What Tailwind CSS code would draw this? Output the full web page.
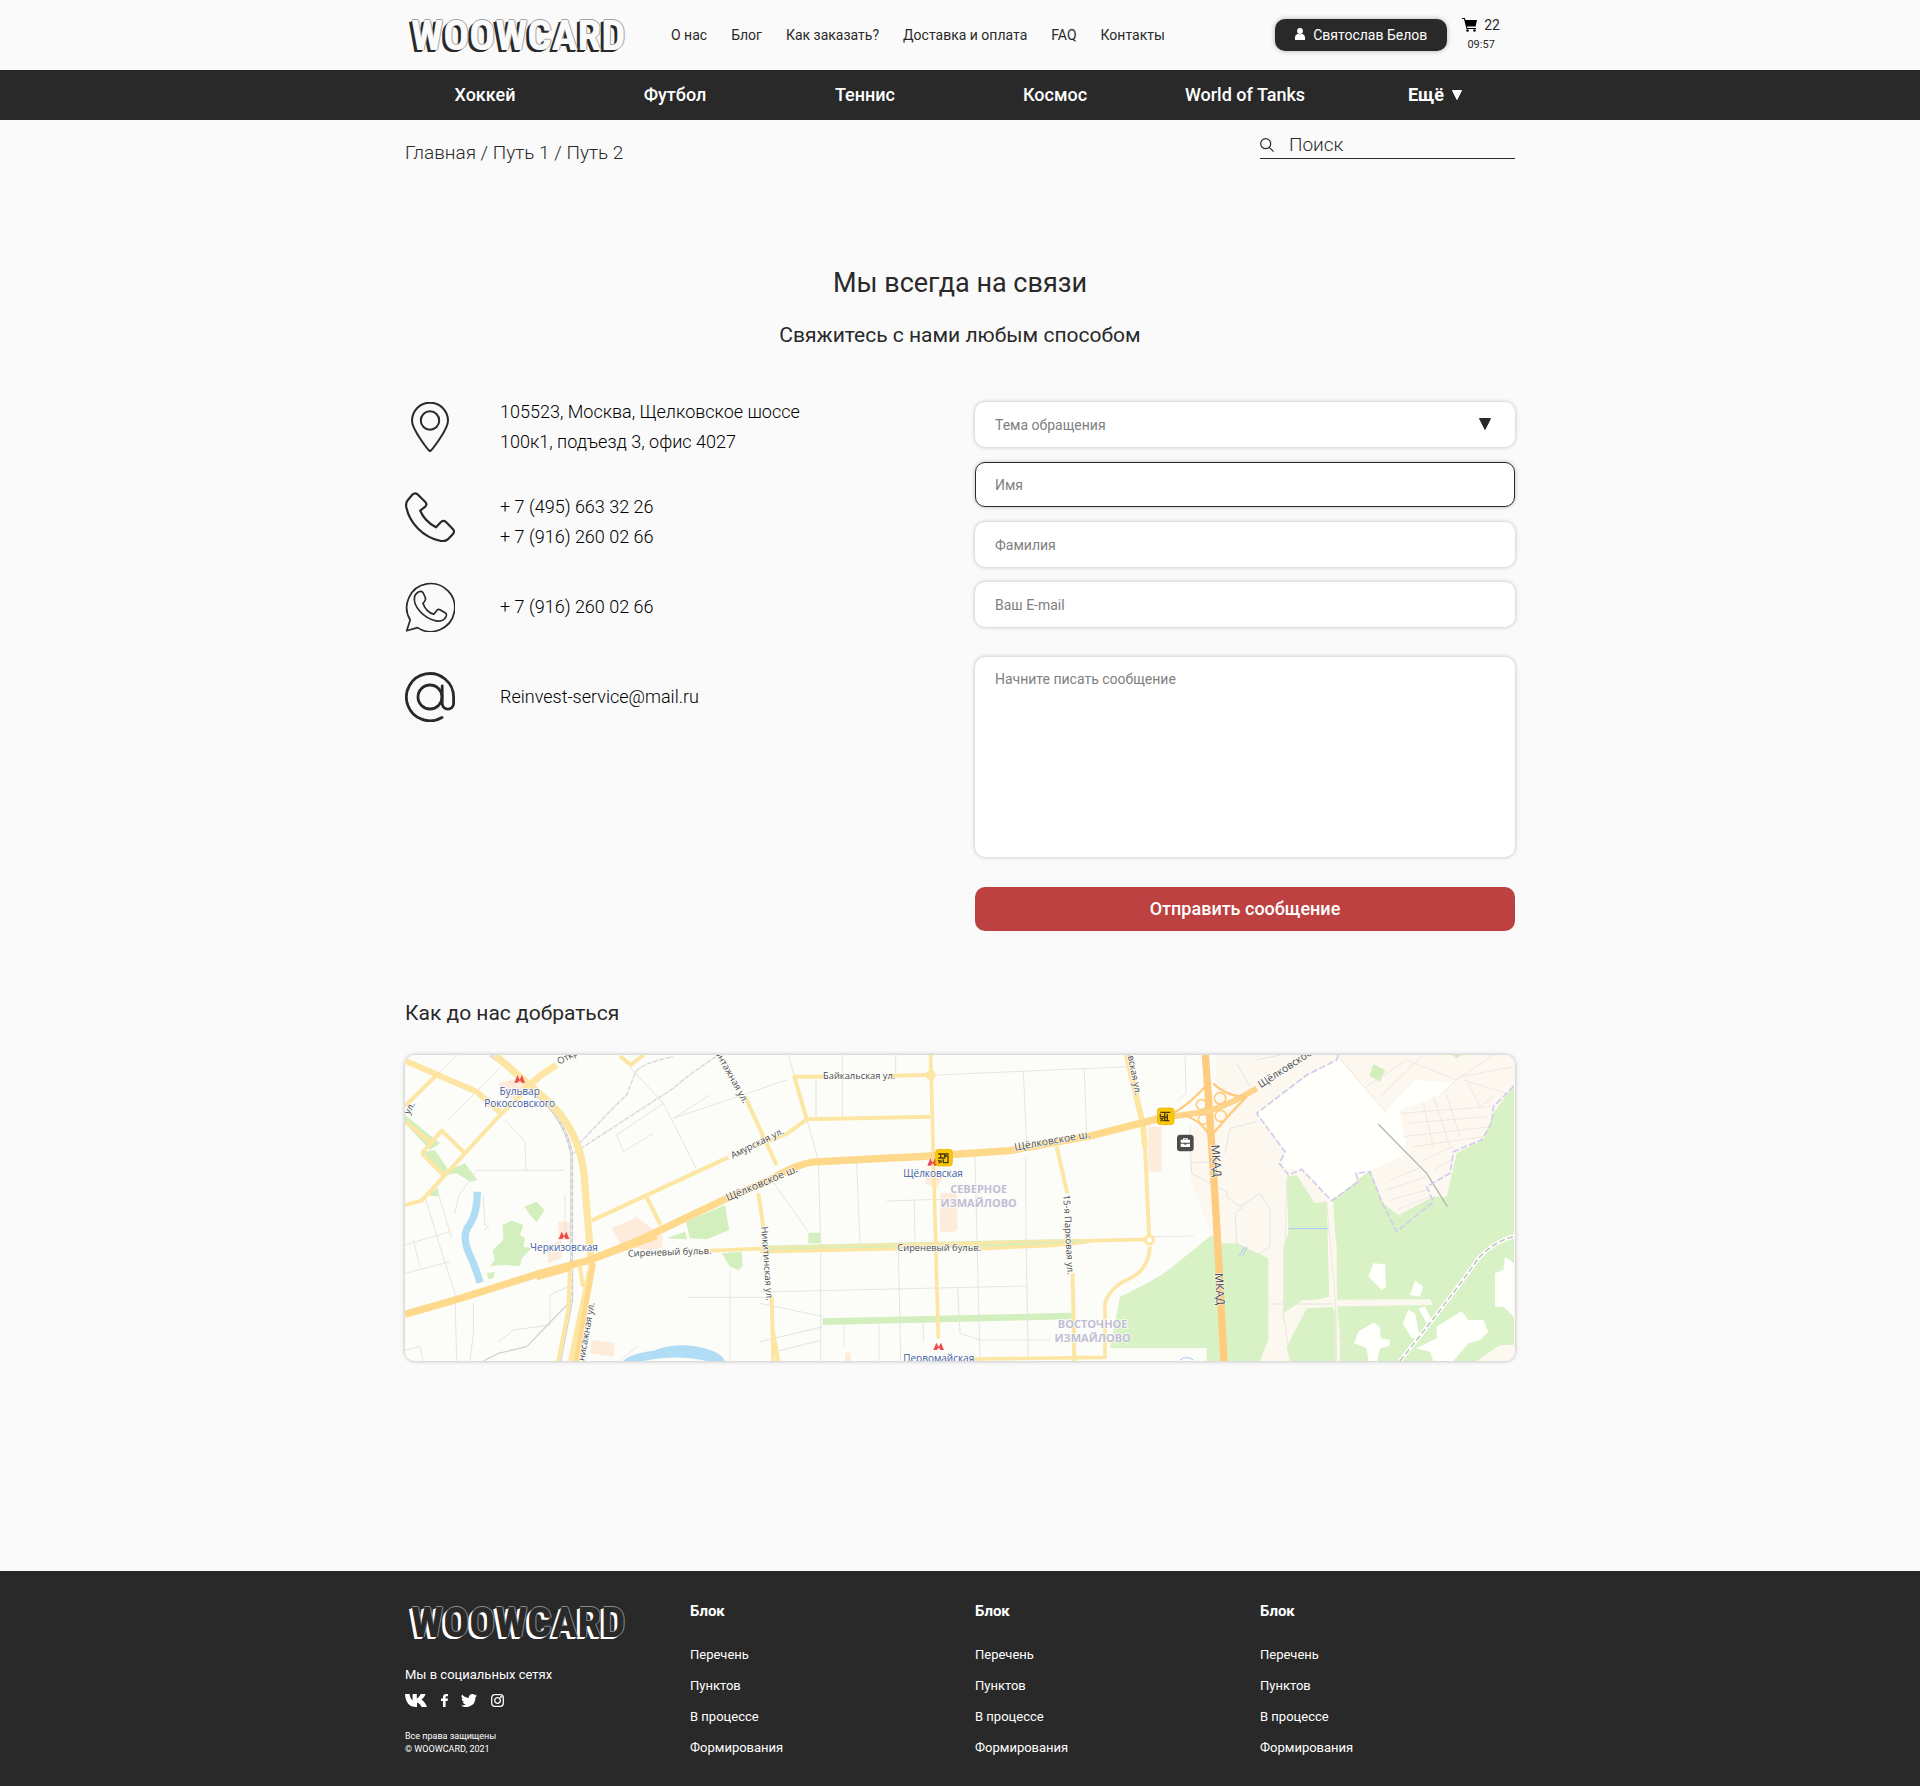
<!DOCTYPE html>
<html lang="ru">
<head>
<meta charset="utf-8">
<meta name="viewport" content="width=device-width, initial-scale=1">
<title>WOOWCARD — Контакты</title>
<script src="https://cdn.jsdelivr.net/npm/@tailwindcss/browser@4"></script>
</head>
<body class="flex min-h-screen flex-col bg-[#fafafa] font-['Roboto',sans-serif] text-[#292929]">

<header>
  <div class="mx-auto flex h-[70px] w-full max-w-[1110px] items-center">
    <a href="#" class="w-[266px] shrink-0 pl-[6px] font-['Liberation_Sans_Narrow','Roboto_Condensed','Roboto',sans-serif] text-[43px] leading-[42px] font-bold text-[#fafafa] [text-shadow:1px_0_#a3a3a3,0_-1px_#a3a3a3,-1px_1px_#292929,-2px_2px_#292929,-3px_2px_#292929]">WOOWCARD</a>
    <nav class="flex gap-6 text-sm leading-5" aria-label="Информация">
      <a href="#">О нас</a>
      <a href="#">Блог</a>
      <a href="#">Как заказать?</a>
      <a href="#">Доставка и оплата</a>
      <a href="#">FAQ</a>
      <a href="#">Контакты</a>
    </nav>
    <button type="button" class="ml-auto flex h-8 items-center gap-2 rounded-[10px] bg-[#292929] px-5 text-sm leading-5 text-white shadow-[0_0_5px_rgba(0,0,0,0.3)]">
      <svg class="mb-0.5 h-3 w-2.5" viewBox="0 0 10 12" fill="currentColor" aria-hidden="true"><circle cx="5" cy="3" r="2.9"/><path d="M0 12V9.500C0 7.300 1.600 6 3 5.700c1.200.8 2.800.8 4 0 1.400.3 3 1.600 3 3.800V12z"/></svg>
      Святослав Белов
    </button>
    <a href="#" class="mr-[15px] ml-[15px] flex flex-col items-center">
      <span class="flex items-center gap-1.5 text-sm leading-5">
        <svg class="h-[14px] w-4 text-black" viewBox="0 0 16 14" fill="currentColor" aria-hidden="true"><path d="M0 0h2.800l.7 2H15l-1.400 6.500H5l.4 1.500H14v1H4.500L2 1H0z"/><circle cx="5.500" cy="12.500" r="1.300"/><circle cx="12.500" cy="12.500" r="1.300"/></svg>
        22
      </span>
      <span class="text-[11px] leading-5">09:57</span>
    </a>
  </div>
  <nav class="bg-[#292929] text-white" aria-label="Категории">
    <div class="mx-auto grid h-[50px] w-full max-w-[1110px] grid-cols-6 items-center gap-[30px] text-center text-lg leading-6 font-medium whitespace-nowrap">
      <a href="#">Хоккей</a>
      <a href="#">Футбол</a>
      <a href="#">Теннис</a>
      <a href="#">Космос</a>
      <a href="#">World of Tanks</a>
      <a href="#" class="flex items-center justify-center gap-2 font-bold">Ещё
        <svg class="size-2.5" viewBox="0 0 10 10" fill="currentColor" aria-hidden="true"><path d="M.5.5h9L5 9.500z" stroke="currentColor" stroke-linejoin="round"/></svg>
      </a>
    </div>
  </nav>
</header>

<main class="mx-auto w-full max-w-[1110px] grow pb-[210px]">
  <div class="flex items-start justify-between">
    <nav class="pt-[21px] text-[19px] leading-6 font-light whitespace-pre" aria-label="Путь"><a href="#">Главная</a> / <a href="#">Путь 1</a> / <a href="#">Путь 2</a></nav>
    <label class="mt-[11px] flex h-7 w-[255px] items-center gap-[15px] border-b border-[#292929]">
      <svg class="size-[14px] shrink-0" viewBox="0 0 14 14" fill="none" stroke="currentColor" stroke-width="1.200" aria-hidden="true"><circle cx="5.700" cy="5.700" r="5"/><path d="M9.300 9.300l4.300 4.300"/></svg>
      <input type="search" placeholder="Поиск" aria-label="Поиск" class="w-full bg-transparent text-[19px] leading-6 font-light outline-none placeholder:text-[#292929]">
    </label>
  </div>

  <h1 class="mt-[98px] text-center text-[27px] leading-10">Мы всегда на связи</h1>
  <p class="mt-3 text-center text-[21px] leading-10">Свяжитесь с нами любым способом</p>

  <div class="mt-[47px] grid grid-cols-2 gap-[30px]">
    <address class="flex flex-col gap-10 text-lg leading-[30px] font-light text-black not-italic">
      <div class="flex h-[50px] items-center gap-[45px]">
        <svg class="size-[50px] shrink-0" viewBox="0 0 50 50" fill="none" stroke="#292929" stroke-width="2" stroke-linejoin="round" aria-hidden="true"><path d="M25 49.200C23.500 48.500 7 27.500 7 18.700a18 18 0 0 1 36 0C43 27.500 26.500 48.500 25 49.200z"/><circle cx="25" cy="18.500" r="9.200"/></svg>
        <p class="text-lg leading-[30px]">105523, Москва, Щелковское шоссе<br>100к1, подъезд 3, офис 4027</p>
      </div>
      <div class="flex h-[50px] items-start gap-[45px]">
        <svg class="size-[50px] shrink-0" viewBox="0 0 50 50" fill="none" stroke="#292929" stroke-width="2.200" stroke-linejoin="round" aria-hidden="true"><path d="M7.500 2.500Q10 .2 12.500 2.300L20.300 10Q22.500 12.300 20.300 14.600L15.200 18.700Q20 29.500 31 35.300L36 30Q38.500 27.800 41 30L48 37.300Q50 39.500 48 42L43 47.200Q40 49.800 36 49C18 45.500 4 30.500 1.200 14.500Q.7 10.500 2.700 8.200z"/></svg>
        <p><a href="#">+ 7 (495) 663 32 26</a><br><a href="#">+ 7 (916) 260 02 66</a></p>
      </div>
      <div class="flex h-[50px] items-center gap-[45px]">
        <svg class="size-[50px] shrink-0" viewBox="0 0 50 50" fill="none" stroke="#292929" stroke-width="1.700" stroke-linejoin="round" aria-hidden="true"><path d="M1.700 48.800L5.200 38A24 24 0 1 1 12.500 45.600z"/><path d="M12 11Q15.500 8 18 10.500L20.500 16Q21 18 18 21.300C19.500 26.500 24 31.300 28.800 32.200L32 28.300Q33.300 26.800 35 27.800L40.500 31Q42 32 41.300 34C39 39.500 35 39.600 31 38.800C18 36 8 24 9.500 15Q10 12.500 12 11z"/></svg>
        <a href="#">+ 7 (916) 260 02 66</a>
      </div>
      <div class="flex h-[50px] items-center gap-[45px]">
        <svg class="size-[50px] shrink-0" viewBox="0 0 50 50" fill="none" stroke="#292929" stroke-width="2.800" stroke-linecap="round" aria-hidden="true"><path d="M37 45.500A23.600 23.600 0 1 1 48.600 25V31.500a5.700 5.700 0 0 1-11.400 0V14"/><circle cx="25" cy="25" r="12"/></svg>
        <a href="#">Reinvest-service@mail.ru</a>
      </div>
    </address>

    <form class="flex flex-col gap-[15px] text-sm leading-5">
      <div class="relative h-[45px]">
        <select aria-label="Тема обращения" class="h-[45px] w-full appearance-none rounded-[10px] bg-white px-5 text-[#808080] shadow-[0_0_4px_rgba(0,0,0,0.25)] outline-none">
          <option>Тема обращения</option>
        </select>
        <svg class="pointer-events-none absolute top-4 right-6 size-3 text-[#292929]" viewBox="0 0 12 12" fill="currentColor" aria-hidden="true"><path d="M.5.5h11L6 11.500z" stroke="currentColor" stroke-linejoin="round"/></svg>
      </div>
      <input type="text" placeholder="Имя" aria-label="Имя" class="h-[45px] rounded-[10px] border border-[#292929] bg-white px-[19px] shadow-[0_0_4px_rgba(0,0,0,0.25)] outline-none placeholder:text-[#808080]">
      <input type="text" placeholder="Фамилия" aria-label="Фамилия" class="h-[45px] rounded-[10px] bg-white px-5 shadow-[0_0_4px_rgba(0,0,0,0.25)] outline-none placeholder:text-[#808080]">
      <input type="email" placeholder="Ваш E-mail" aria-label="Ваш E-mail" class="h-[45px] rounded-[10px] bg-white px-5 shadow-[0_0_4px_rgba(0,0,0,0.25)] outline-none placeholder:text-[#808080]">
      <textarea placeholder="Начните писать сообщение" aria-label="Сообщение" class="mt-[15px] h-[200px] resize-none rounded-[10px] bg-white px-5 py-3 shadow-[0_0_4px_rgba(0,0,0,0.25)] outline-none placeholder:text-[#808080]"></textarea>
      <button type="submit" class="mt-[15px] h-11 rounded-[10px] bg-[#be4141] text-lg leading-6 font-medium text-white">Отправить сообщение</button>
    </form>
  </div>

  <h2 class="mt-[62px] text-[21px] leading-10">Как до нас добраться</h2>

  <div class="mt-[22px] h-[306px] overflow-hidden rounded-[10px] shadow-[0_0_4px_rgba(0,0,0,0.3)]">
    <svg class="h-full w-full" viewBox="45 225 3330 918" preserveAspectRatio="xMidYMid slice" role="img" aria-label="Карта проезда">
      <rect x="45" y="225" width="3330" height="918" fill="#fcfdf8"/>

      <!-- land areas -->
      <g transform="translate(2250 0)">
        <path fill="#fcf8f0" d="M230 225H1130V1143H230L215 765L150 600L160 440L225 420z"/>
        <path fill="#d9f2c5" d="M-60 950Q60 895 110 850L215 765L240 790L290 790L385 835V1080L360 1143H200V1105H-90z"/>
        <path fill="#d9f2c5" d="M440 590L470 585L525 670L560 665L568 950L490 970L440 1030L428 1020L430 800L445 760z"/>
        <path fill="#d9f2c5" d="M575 662L650 605L650 575L690 573L730 670L775 705L880 650L920 650L950 520L1030 480L1060 400L1122 315V1143H600V1060L590 980L500 985L440 1100L450 1143H590V800z"/>
        <path fill="#fffffb" d="M350 400L500 290L595 235L740 400L700 350L800 480L755 540L690 573L650 600L575 662L490 575L430 560L435 510z"/>
        <path fill="#fffffb" d="M740 390L830 300L940 310L900 345L780 390L800 520L750 545L700 530L665 480z"/>
        <path fill="#fcf8f0" d="M430 1000L490 960L870 958L878 975L500 980L440 1080z"/>
        <path fill="#fcf8f0" d="M565 665H580L592 960V1000H586L568 950z"/>
        <path fill="#fffffb" d="M700 850L735 853L738 920L725 930L685 890zM825 903L850 920L840 950L810 945zM805 990L825 1000L840 1075L815 1075L788 1030zM835 985L855 980L872 1015L860 1030zM700 1028L720 1040L722 1075L750 1080L748 1097L720 1105L712 1143H685L680 1105L642 1090L655 1055zM890 1040L965 993L985 1020H1030L1045 1055L1020 1080L985 1090L940 1143H880L870 1115L828 1105L890 1075zM1065 880L1090 870L1095 830L1122 850V1010L1090 980H1065z"/>
        <path fill="#fcf8f0" d="M1010 1143L1080 1095H1122V1143z"/>
        <path fill="#d3efbe" d="M700 253L735 270L720 305L688 288zM935 225H965L950 235z"/>
        <path fill="#fdebdc" d="M25 440H65V575H25z"/>
      </g>
      <g fill="#d3efbe">
        <path d="M45 405L150 490L120 510L45 430zM100 515L135 510L175 570L225 550L262 600L240 605L200 580L170 585L150 580zM118 635L145 625L145 648L120 648zM403 680L440 665L463 690L440 727L420 705zM338 735L365 722L400 735L390 765L405 775L400 800L425 805L395 835L390 858L345 855L300 858L315 840L308 810L340 780zM888 725L1005 675L1018 750L950 778L900 775zM830 775L885 755L892 778zM995 820L1055 815L1058 860L1045 870L1020 860zM1255 758H1292V790H1255zM1298 1015L2045 998V1018L1298 1035zM290 880L315 875L310 895L295 897zM1115 797L2060 776L2100 784L1990 800L1115 812z"/>
      </g>
      <g fill="#fdebdc">
        <path d="M325 310L400 290L420 320L380 360L345 345zM505 725H540V780H505zM470 800L515 780V835L475 850zM665 745L740 712L820 770L815 805L760 810L690 790zM605 1080L675 1090L670 1130L600 1120zM1650 640H1702V745Q1702 755 1690 755H1655Q1650 755 1650 745zM1365 1118H1382V1143H1365zM1610 580L1660 590L1640 625L1605 610z"/>
      </g>
      <path fill="none" stroke="#b1dcf5" stroke-width="22" d="M262 635Q262 700 238 735Q215 765 235 815Q260 870 270 908"/>
      <path fill="#b1dcf5" d="M700 1143Q720 1120 790 1112Q850 1090 910 1098Q990 1110 1005 1143H950Q860 1122 760 1143z"/>

      <!-- minor streets -->
      <g fill="none" stroke="#e4e4e1" stroke-width="3">
        <path d="M200 225L135 290M330 262L175 420M272 340L300 360M345 420L405 485L408 570M525 571H260L205 650L195 700M105 650L150 800L195 940L200 1143M45 795L180 755M45 880L180 845M70 780L90 860M145 640L185 775M45 1110L90 1100L100 1143M250 970V1060L240 1143M525 645V780M720 262L820 370L918 565M850 415L960 345M820 370L680 465L700 515L790 460M740 1100L690 1143M895 952H1140M1020 870V1143M850 415L1190 300M280 650L285 735L297 740L282 750M325 1085L370 1050L480 1035V945L535 920"/>
        <path d="M1195 225L1285 540L1292 790V1143M1278 300V410M1357 225V410M1517 225V280M1640 285L2215 260M1900 272L1910 500M1907 530L1908 780L1915 1143M2083 265L2090 470M1400 550L1410 790M1755 530L1770 1143M1490 663L1650 658M1573 663L1575 790M1145 600L1255 755M1110 936L1910 918M1110 970L1300 1010M1110 1085L1300 1040M1165 1113L1295 1080M1525 800L1532 1143M1703 920L1710 1060L1770 1080H1980M1467 1030V1143M1362 1035V1100M1600 1030V1085"/>
        <path d="M2385 225L2388 340L2365 360M2400 435Q2400 500 2405 580L2510 635V650L2550 680L2610 640L2640 690V800L2600 825L2540 790L2535 700L2560 680M2600 425L2520 445L2505 520M2480 545L2400 548M2540 250L2580 320M2600 240L2670 225M2285 770L2410 768M2640 972H2830"/>
      </g>
      <g transform="translate(2250 0)" fill="none" stroke="#eee7e0" stroke-width="3">
        <path d="M600 235L740 400M720 350L850 225M680 320L800 240L950 300L1060 225M900 345L960 290L1122 260M980 300L1020 380L1060 350M780 400L1050 380M800 430L1040 410M790 470L1050 440M820 500L1030 470M850 540L940 500M880 570L935 540M750 600L850 560M740 630L860 590M750 660L860 630M770 690L870 650M880 350L930 500M920 345L960 470M850 370L880 500M970 300L1100 340M560 665L586 960V1143M440 600L430 1000L445 1100M640 1143L592 1060"/>
      </g>

      <!-- railways -->
      <g fill="none" stroke="#d2d2d2" stroke-width="6">
        <path stroke-width="9" d="M300 225Q380 280 425 335Q520 400 545 520V960L510 1143"/>
        <path stroke-width="4" d="M545 960L410 1100L325 1120L280 1143M850 230Q750 250 735 280L710 345Q680 370 560 500M985 225Q900 280 850 325Q720 410 550 520"/>
        <path stroke="#b5b5b0" stroke-width="4" d="M2965 433L3110 580L3172 680"/>
        <path stroke="#fff" stroke-width="12" d="M3030 1143Q3200 930 3265 835Q3310 785 3375 768"/>
        <path stroke="#b9bdb4" stroke-width="4" stroke-dasharray="18 8" d="M3030 1143Q3200 930 3265 835Q3310 785 3375 768"/>
      </g>
      <g fill="none" stroke="#fbfbf8" stroke-width="3" stroke-dasharray="10 10">
        <path d="M300 225Q380 280 425 335Q520 400 545 520V960L510 1143M850 230Q750 250 735 280L710 345Q680 370 560 500M985 225Q900 280 850 325Q720 410 550 520"/>
      </g>
      <path fill="none" stroke="#d3cbee" stroke-width="5" stroke-dasharray="20 7" d="M2845 225L2840 240L2750 285L2600 400L2685 515L2668 550L2695 585L2735 568L2825 662L2905 605L2898 580L2940 575L2975 665L3020 755L3130 665L3110 620L3180 580L3190 515L3275 480L3305 430L3310 380L3375 315"/>

      <!-- yellow roads -->
      <g fill="none" stroke="#fde6a4" stroke-linejoin="round">
        <path stroke-width="18" d="M45 242L260 335L330 395"/>
        <path stroke-width="12" d="M45 378L140 285M45 675L95 662L330 405L420 320M95 520L155 452L225 520M95 520L160 585M45 425L120 485M690 228L722 255L760 225"/>
        <path stroke-width="20" d="M400 330L460 280L500 255"/>
        <path stroke-width="22" d="M315 225Q400 300 470 360Q570 450 583 590L598 780L605 860L545 1143"/>
        <path stroke-width="12" d="M605 722L1015 532M1090 500L1190 462L1250 418L1620 410M770 652L812 735M1250 418L1213 290H1300M1500 287L1620 285M1065 350L1160 555M1105 640L1120 740M1145 950L1150 1143M1150 1060L1165 1143M2000 500L2032 640M2048 880L2053 1143M570 860L578 915L600 915M540 860L535 990L505 1143"/>
        <path stroke-width="11" d="M1622 225L1640 900L1645 1075M960 812L1110 806L2270 778M1110 815L1520 806M1770 806L1990 796L2100 784M1750 1137L2145 1132V970Q2160 920 2220 895Q2275 870 2280 800"/>
        <path stroke-width="18" d="M2210 225L2258 430L2265 500"/>
        <path stroke-width="12" d="M2264 480L2278 780"/>
        <circle cx="1622" cy="285" r="9" stroke-width="12"/>
        <circle cx="2278" cy="780" r="12" stroke-width="9" fill="#fff"/>
      </g>
      <path fill="none" stroke="#d9eeb8" stroke-width="6" d="M1115 806L1515 799M1775 796L2080 784"/>
      <g fill="none" stroke="#fed98c" stroke-linejoin="round">
        <path stroke-width="22" d="M45 1003L195 960L450 880L600 840L760 775L1000 660L1140 600Q1230 545 1290 545L1620 528L1860 512L2100 468L2330 410"/>
        <path stroke-width="16" d="M440 893L540 865M620 835L800 770M610 850L590 960L560 1143"/>
      </g>
      <g fill="none" stroke="#fecb7f">
        <path stroke-width="22" d="M2446 225L2460 420L2478 700L2502 1143"/>
        <path stroke-width="18" d="M2310 415L2450 395Q2530 370 2600 325" stroke="#fed38a"/>
        <path stroke-width="7" d="M2350 400Q2400 370 2445 320M2470 310Q2510 350 2570 350M2380 405Q2430 420 2455 460M2470 460Q2520 400 2570 350"/>
        <circle cx="2434" cy="374" r="15" stroke-width="5"/><circle cx="2490" cy="355" r="17" stroke-width="5"/><circle cx="2440" cy="418" r="15" stroke-width="5"/><circle cx="2492" cy="408" r="17" stroke-width="5"/>
      </g>
      <path fill="none" stroke="#a9c8f7" stroke-width="3" d="M2548 828L2565 800M2556 830L2572 802M2695 746H2815M2370 1140Q2390 1125 2410 1140"/>

      <!-- street names -->
      <g font-family="'Open Sans','Noto Sans',sans-serif" font-size="28" fill="#4b4b50" stroke="#fdfdf8" stroke-width="4" paint-order="stroke">
        <text transform="translate(508 254) rotate(-28)">Открытое ш.</text>
        <text transform="translate(58 405) rotate(-62)">ул.</text>
        <text transform="translate(962 195) rotate(61)">Монтажная ул.</text>
        <text transform="translate(1028 536) rotate(-26)">Амурская ул.</text>
        <text transform="translate(1013 664) rotate(-23)" font-size="31">Щёлковское ш.</text>
        <text transform="translate(714 830) rotate(-2)">Сиреневый бульв.</text>
        <text transform="translate(1114 740) rotate(86)">Никитинская ул.</text>
        <text transform="translate(574 1194) rotate(-80)">Вернисажная ул.</text>
        <text x="1299" y="298">Байкальская ул.</text>
        <text transform="translate(1875 512) rotate(-10)" font-size="31">Щёлковское ш.</text>
        <text x="1522" y="813">Сиреневый бульв.</text>
        <text transform="translate(2020 645) rotate(87)">15-я Парковая ул.</text>
        <text transform="translate(2236 346) rotate(79)" text-anchor="end">Хабаровская ул.</text>
        <text transform="translate(2464 495) rotate(86)" font-size="34">МКАД</text>
        <text transform="translate(2474 880) rotate(86)" font-size="34">МКАД</text>
        <text transform="translate(2612 325) rotate(-33)" font-size="31">Щёлковское ш.</text>
      </g>
      <g font-family="'Open Sans','Noto Sans',sans-serif" font-size="30" fill="#3f5ca8" stroke="#fdfdf8" stroke-width="4" paint-order="stroke" text-anchor="middle">
        <text x="389" y="346">Бульвар</text>
        <text x="389" y="382">Рокоссовского</text>
        <text x="522" y="813">Черкизовская</text>
        <text x="1629" y="592">Щёлковская</text>
        <text x="1646" y="1146">Первомайская</text>
      </g>
      <g font-family="'Open Sans','Noto Sans',sans-serif" font-size="33" font-weight="700" fill="#c0bdd6" stroke="#fdfdf8" stroke-width="4" paint-order="stroke" text-anchor="middle">
        <text x="1766" y="640">СЕВЕРНОЕ</text>
        <text x="1766" y="681">ИЗМАЙЛОВО</text>
        <text x="2108" y="1044">ВОСТОЧНОЕ</text>
        <text x="2108" y="1085">ИЗМАЙЛОВО</text>
      </g>

      <!-- metro and transport markers -->
      <g fill="#ee4b4f">
        <path d="M373 308L382 286L389 299L396 286L405 308H394L391 301L389 305L387 301L384 308z"/>
        <path d="M506 777L515 755L522 768L529 755L538 777H527L524 770L522 774L520 770L517 777z"/>
        <path d="M1612 557L1621 535L1628 548L1635 535L1644 557H1633L1630 550L1628 554L1626 550L1623 557z"/>
        <path d="M1630 1110L1639 1088L1646 1101L1653 1088L1662 1110H1651L1648 1103L1646 1107L1644 1103L1641 1110z"/>
      </g>
      <g fill="none" stroke="#4c3a06" stroke-width="4">
        <rect x="1637" y="508" width="50" height="50" rx="9" fill="#fac60b" stroke="#e5b400" stroke-width="2"/>
        <path d="M1645 522H1676M1645 534H1664V522M1652 522V534M1666 528H1674V548M1660 538V548H1676M1644 541L1656 546M1646 550L1654 541"/>
        <rect x="2302" y="384" width="50" height="50" rx="9" fill="#fac60b" stroke="#e5b400" stroke-width="2"/>
        <path d="M2311 397H2341M2324 397V410H2311V402M2332 402V422M2338 422H2324V412H2332M2310 414L2321 422M2312 424L2320 413"/>
      </g>
      <rect x="2361" y="464" width="50" height="50" rx="10" fill="#4b4b4b"/>
      <path fill="#fff" d="M2379 479V475H2393V479H2400V488H2372V479zM2383 479H2389V478H2383zM2372 491H2383V494H2389V491H2400V501H2372z"/>
    </svg>
  </div>
</main>

<footer class="bg-[#292929] text-white">
  <div class="mx-auto grid w-full max-w-[1110px] grid-cols-4 gap-[30px] pt-[30px] pb-[23px] text-[13px] leading-[31px]">
    <div>
      <a href="#" class="block pl-[6px] font-['Liberation_Sans_Narrow','Roboto_Condensed','Roboto',sans-serif] text-[43px] leading-[42px] font-bold text-[#292929] [text-shadow:1px_0_#8a8a8a,0_-1px_#8a8a8a,-1px_1px_#fff,-2px_2px_#fff,-3px_2px_#fff]">WOOWCARD</a>
      <p class="mt-[22px] leading-5">Мы в социальных сетях</p>
      <div class="mt-2 flex h-[14px] items-center">
        <a href="#" aria-label="ВКонтакте"><svg class="h-[13px] w-[22px]" viewBox="0 0 22 13" fill="currentColor"><path d="M0 0H4.500C5 3 6 5.200 7.600 6.500V0H11.800V4.500C13.500 3.800 14.700 2.200 15.600 0H20.500C19.700 2.500 18.200 4.300 16.500 5.800C19 7.300 20.800 9.800 22 13H16.600C15.600 10.800 14.200 9.300 12 8.600V13H11C4.500 13 .4 8.500 0 0z"/></svg></a>
        <a href="#" aria-label="Facebook" class="ml-[14px]"><svg class="h-[13px] w-[7px]" viewBox="0 0 7 13" fill="currentColor"><path d="M2 13V7H0V4.600H2V3C2 1 3.200 0 5 0H7V2.200H5.600C4.800 2.200 4.600 2.600 4.600 3.200V4.600H7L6.600 7H4.600V13z"/></svg></a>
        <a href="#" aria-label="Twitter" class="ml-[13px]"><svg class="h-[13px] w-4" viewBox="0 0 16 13" fill="currentColor"><path d="M16 1.500a6.500 6.500 0 0 1-1.900.5A3.300 3.300 0 0 0 15.600.2a6.500 6.500 0 0 1-2.100.8A3.300 3.300 0 0 0 7.900 4 9.300 9.300 0 0 1 1.100.6a3.300 3.300 0 0 0 1 4.400A3.300 3.300 0 0 1 .6 4.600a3.300 3.300 0 0 0 2.600 3.200 3.300 3.300 0 0 1-1.500.1 3.300 3.300 0 0 0 3.100 2.300A6.600 6.600 0 0 1 0 11.500 9.300 9.300 0 0 0 14.400 3.200 6.700 6.700 0 0 0 16 1.500z"/></svg></a>
        <a href="#" aria-label="Instagram" class="ml-[14px]"><svg class="size-[13px]" viewBox="0 0 13 13" fill="none" stroke="currentColor" stroke-width="1.300"><rect x=".7" y=".7" width="11.600" height="11.600" rx="3"/><circle cx="6.500" cy="6.500" r="2.800"/><circle cx="10" cy="3" r=".4"/></svg></a>
      </div>
      <p class="mt-[23px] text-[9px] leading-[13px]">Все права защищены<br>© WOOWCARD, 2021</p>
    </div>
    <div>
      <h3 class="text-[15px] leading-5 font-bold">Блок</h3>
      <ul class="mt-[18px]"><li><a href="#">Перечень</a></li><li><a href="#">Пунктов</a></li><li><a href="#">В процессе</a></li><li><a href="#">Формирования</a></li></ul>
    </div>
    <div>
      <h3 class="text-[15px] leading-5 font-bold">Блок</h3>
      <ul class="mt-[18px]"><li><a href="#">Перечень</a></li><li><a href="#">Пунктов</a></li><li><a href="#">В процессе</a></li><li><a href="#">Формирования</a></li></ul>
    </div>
    <div>
      <h3 class="text-[15px] leading-5 font-bold">Блок</h3>
      <ul class="mt-[18px]"><li><a href="#">Перечень</a></li><li><a href="#">Пунктов</a></li><li><a href="#">В процессе</a></li><li><a href="#">Формирования</a></li></ul>
    </div>
  </div>
</footer>
</body>
</html>
